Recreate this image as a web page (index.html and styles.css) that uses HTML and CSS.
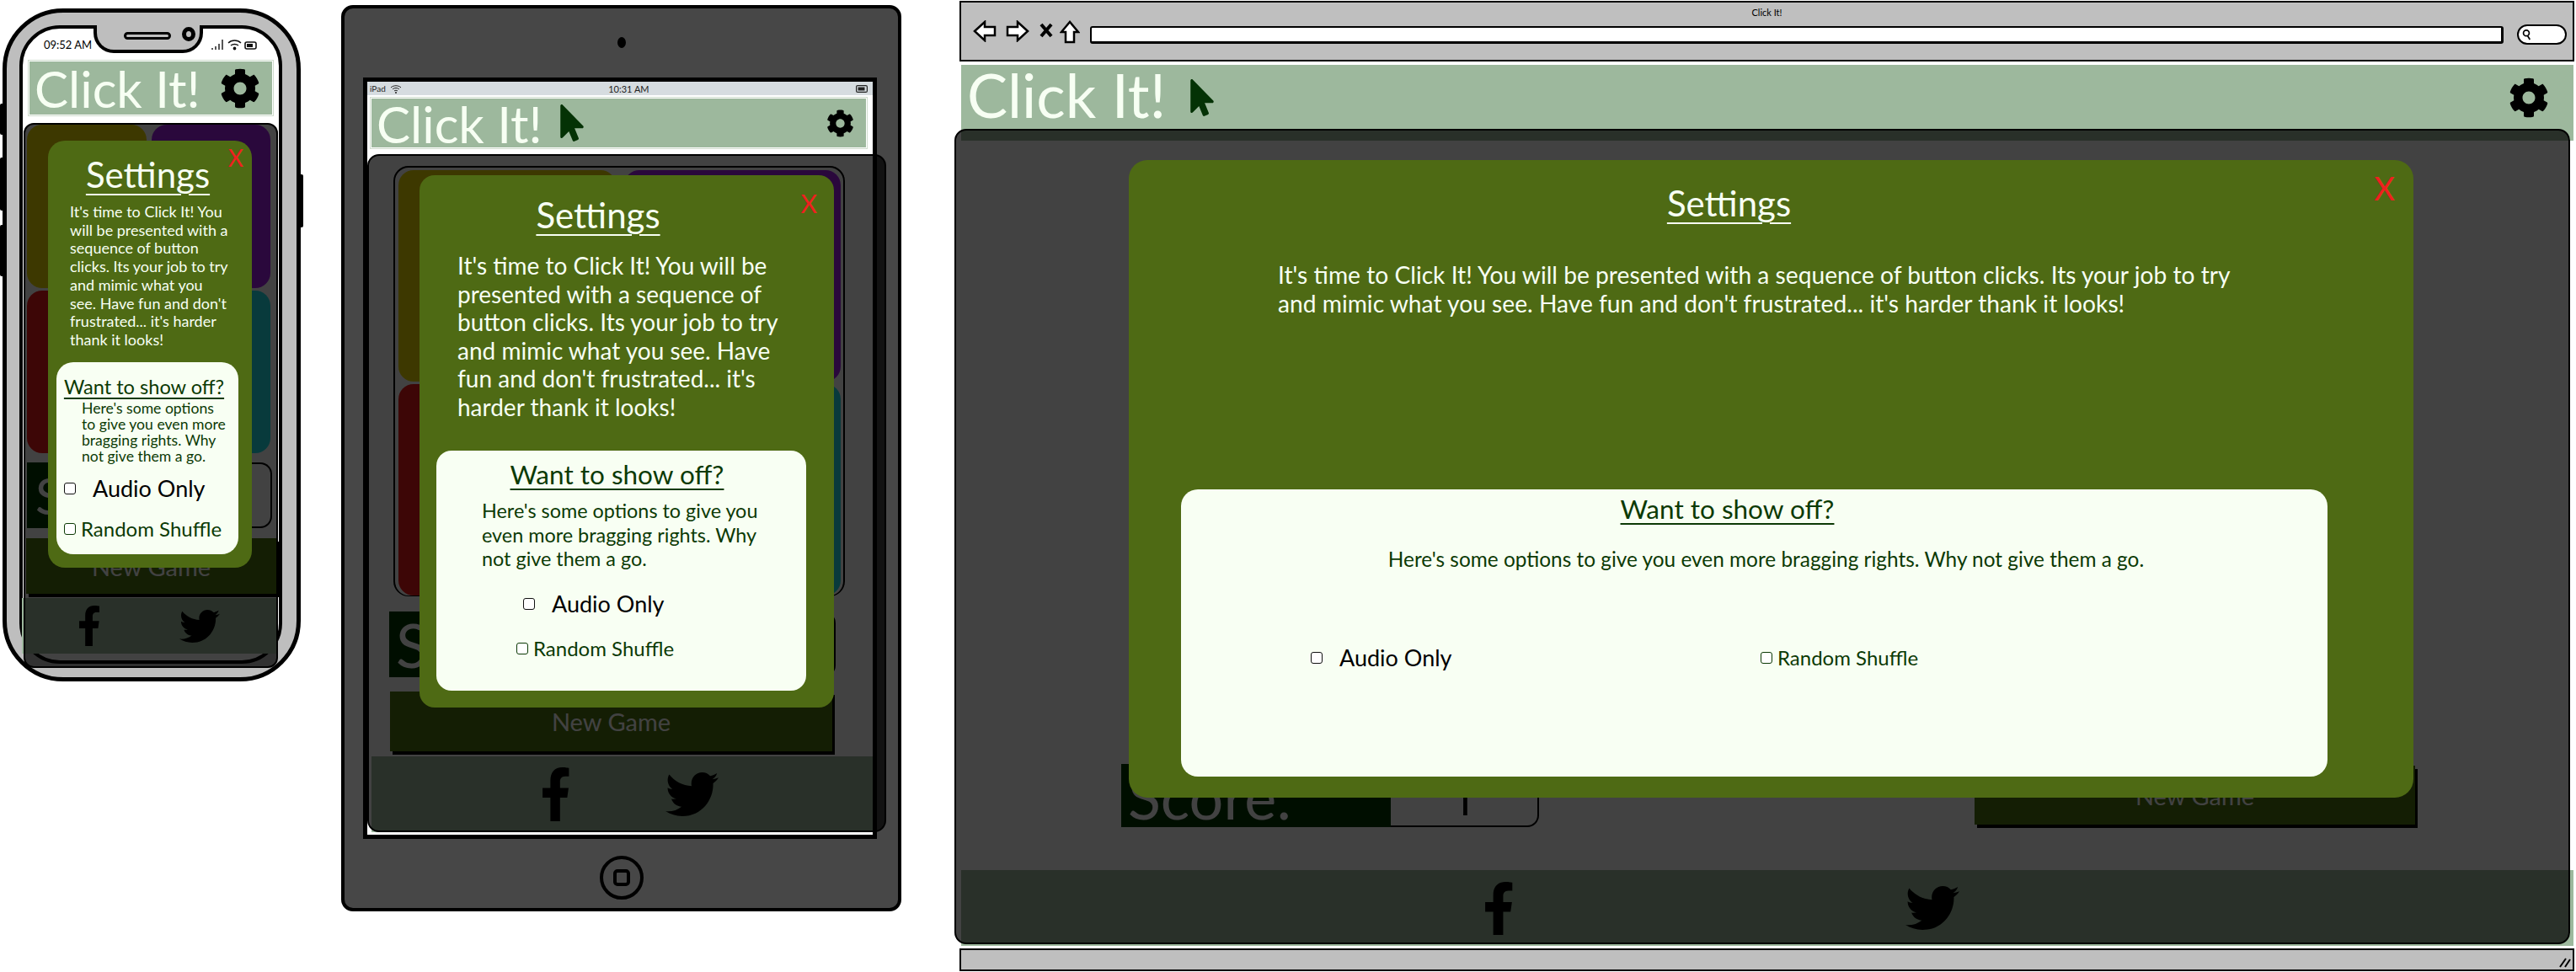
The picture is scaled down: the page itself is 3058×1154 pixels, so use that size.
FILE: index.html
```html
<!DOCTYPE html>
<html lang="en">
<head>
  <meta charset="UTF-8"/>
  <title>Click It! wireframes</title>
  <link rel="stylesheet" href="styles.css">
</head>
<body>
  <svg class="defs" width="0" height="0">
    <symbol id="i-gear" viewBox="0 0 512 512"><path d="M487.4 315.7l-42.6-24.6c4.3-23.2 4.3-47 0-70.2l42.6-24.6c4.9-2.8 7.1-8.6 5.5-14-11.1-35.6-30-67.8-54.7-94.6-3.8-4.1-10-5.1-14.8-2.3L380.8 110c-17.9-15.4-38.5-27.3-60.8-35.1V25.8c0-5.6-3.9-10.5-9.4-11.7-36.7-8.2-74.3-7.8-109.2 0-5.5 1.2-9.4 6.1-9.4 11.7V75c-22.2 7.9-42.8 19.8-60.8 35.1L88.7 85.5c-4.9-2.8-11-1.9-14.8 2.3-24.7 26.7-43.6 58.9-54.7 94.6-1.7 5.4.6 11.2 5.5 14L67.3 221c-4.3 23.2-4.3 47 0 70.2l-42.6 24.6c-4.9 2.8-7.1 8.6-5.5 14 11.1 35.6 30 67.8 54.7 94.6 3.8 4.1 10 5.1 14.8 2.3l42.6-24.6c17.9 15.4 38.5 27.3 60.8 35.1v49.2c0 5.6 3.9 10.5 9.4 11.7 36.7 8.2 74.3 7.8 109.2 0 5.5-1.2 9.4-6.1 9.4-11.7v-49.2c22.2-7.9 42.8-19.8 60.8-35.1l42.6 24.6c4.9 2.8 11 1.9 14.8-2.3 24.7-26.7 43.6-58.9 54.7-94.6 1.5-5.5-.7-11.3-5.6-14.1zM256 336c-44.1 0-80-35.9-80-80s35.9-80 80-80 80 35.9 80 80-35.9 80-80 80z"/></symbol>
    <symbol id="i-pointer" viewBox="0 0 320 512"><path d="M302.189 329.126H196.105l55.831 135.993c3.889 9.428-.555 19.999-9.444 23.999l-49.165 21.427c-9.165 4-19.443-.571-23.332-9.714l-53.053-129.136-86.664 89.138C18.729 472.71 0 463.554 0 447.977V18.299C0 1.899 19.921-6.096 30.277 5.443l284.412 292.542c11.472 11.179 3.007 31.141-12.5 31.141z"/></symbol>
    <symbol id="i-facebook" viewBox="22 0 298 512" preserveAspectRatio="none"><path d="M279.14 288l14.22-92.66h-88.91v-60.13c0-25.35 12.42-50.06 52.24-50.06h40.42V6.26S260.43 0 225.36 0c-73.22 0-121.08 44.38-121.08 124.72v70.62H22.89V288h81.39v224h100.17V288z"/></symbol>
    <symbol id="i-twitter" viewBox="0 48 512 416" preserveAspectRatio="none"><path d="M459.37 151.716c.325 4.548.325 9.097.325 13.645 0 138.72-105.583 298.558-298.558 298.558-59.452 0-114.68-17.219-161.137-47.106 8.447.974 16.568 1.299 25.34 1.299 49.055 0 94.213-16.568 130.274-44.832-46.132-.975-84.792-31.188-98.112-72.772 6.498.974 12.995 1.624 19.818 1.624 9.421 0 18.843-1.3 27.614-3.573-48.081-9.747-84.143-51.98-84.143-102.985v-1.299c13.969 7.797 30.214 12.67 47.431 13.319-28.264-18.843-46.781-51.005-46.781-87.391 0-19.492 5.197-37.36 14.294-52.954 51.655 63.675 129.3 105.258 216.365 109.807-1.624-7.797-2.599-15.918-2.599-24.04 0-57.828 46.782-104.934 104.934-104.934 30.213 0 57.502 12.67 76.67 33.137 23.715-4.548 46.456-13.32 66.599-25.34-7.798 24.366-24.366 44.833-46.132 57.827 21.117-2.273 41.584-8.122 60.426-16.243-14.292 20.791-32.161 39.308-52.628 54.253z"/></symbol>
  </svg>

  <div class="canvas">

    <!-- PHONE -->
    <div class="phone">
      <span class="side-btn side-btn-a"></span>
      <span class="side-btn side-btn-b"></span>
      <span class="side-btn side-btn-c"></span>
      <span class="side-btn side-btn-d"></span>
      <div class="phone-screen">
        <div class="notch"><span class="speaker"></span><span class="lens"></span></div>
        <div class="phone-status">
          <span>09:52 AM</span>
          <svg class="phone-signal" viewBox="0 0 54 14" fill="none" stroke="#111" stroke-width="1.4">
            <path d="M1 13v-2M5 13V9M9 13V6M13 13V1"/>
            <path d="M20 5c4-4 11-4 15 0M23 8c2.500-2 6.500-2 9 0"/>
            <circle cx="27.500" cy="11.500" r="1.200" fill="#111"/>
            <rect x="40" y="4" width="13" height="8" rx="2" stroke-width="1.600"/>
            <rect x="42" y="6" width="7" height="4" fill="#111" stroke="none"/>
          </svg>
        </div>
        <div class="header">
          <span class="logo">Click It!</span>
          <svg class="gear"><use href="#i-gear"/></svg>
        </div>
        <div class="board">
          <div class="pad pad-yellow"></div><div class="pad pad-purple"></div>
          <div class="pad pad-red"></div><div class="pad pad-teal"></div>
        </div>
        <div class="controls">
          <div class="score"><span class="score-label">Score:</span><span class="score-value">1</span></div>
          <div class="new-game">New Game</div>
        </div>
        <div class="footer">
          <svg class="fb"><use href="#i-facebook"/></svg>
          <svg class="tw"><use href="#i-twitter"/></svg>
        </div>
        <div class="overlay">
          <div class="modal">
            <span class="close">X</span>
            <h2>Settings</h2>
            <p class="intro">It's time to Click It! You<br>will be presented with a<br>sequence of button<br>clicks. Its your job to try<br>and mimic what you<br>see. Have fun and don't<br>frustrated... it's harder<br>thank it looks!</p>
            <div class="card">
              <h3>Want to show off?</h3>
              <p class="card-text">Here's some options<br>to give you even more<br>bragging rights. Why<br>not give them a go.</p>
              <div class="options">
                <label class="opt opt-audio"><input type="checkbox" class="check">Audio Only</label>
                <label class="opt opt-shuffle"><input type="checkbox" class="check">Random Shuffle</label>
              </div>
            </div>
          </div>
        </div>
      </div>
    </div>

    <!-- TABLET -->
    <div class="tablet">
      <span class="tablet-cam"></span>
      <div class="tablet-screen">
        <div class="tablet-status">
          <span class="tablet-carrier">iPad
            <svg class="tablet-wifi" viewBox="0 0 14 11" fill="none" stroke="#222" stroke-width="1"><path d="M1 4c3-3 9-3 12 0M3 6c2-2 6-2 8 0M5 8c1-1 3-1 4 0"/><circle cx="7" cy="10" r=".6" fill="#222"/></svg>
          </span>
          <span class="tablet-time">10:31 AM</span>
          <svg class="tablet-batt" viewBox="0 0 14 9" fill="none" stroke="#222" stroke-width="1.200"><rect x=".6" y=".6" width="12.800" height="7.800" rx="1.500"/><rect x="2.500" y="2.500" width="8" height="4" fill="#222" stroke="none"/></svg>
        </div>
        <div class="header">
          <span class="logo">Click It!</span>
          <svg class="pointer"><use href="#i-pointer"/></svg>
          <svg class="gear"><use href="#i-gear"/></svg>
        </div>
        <div class="board">
          <div class="pad pad-yellow"></div><div class="pad pad-purple"></div>
          <div class="pad pad-red"></div><div class="pad pad-teal"></div>
        </div>
        <div class="controls">
          <div class="score"><span class="score-label">Score:</span><span class="score-value">1</span></div>
          <div class="new-game">New Game</div>
        </div>
        <div class="footer">
          <svg class="fb"><use href="#i-facebook"/></svg>
          <svg class="tw"><use href="#i-twitter"/></svg>
        </div>
        <div class="overlay">
          <div class="modal">
            <span class="close">X</span>
            <h2>Settings</h2>
            <p class="intro">It's time to Click It! You will be<br>presented with a sequence of<br>button clicks. Its your job to try<br>and mimic what you see. Have<br>fun and don't frustrated... it's<br>harder thank it looks!</p>
            <div class="card">
              <h3>Want to show off?</h3>
              <p class="card-text">Here's some options to give you<br>even more bragging rights. Why<br>not give them a go.</p>
              <div class="options">
                <label class="opt opt-audio"><input type="checkbox" class="check">Audio Only</label>
                <label class="opt opt-shuffle"><input type="checkbox" class="check">Random Shuffle</label>
              </div>
            </div>
          </div>
        </div>
      </div>
      <span class="tablet-home"><span></span></span>
    </div>

    <!-- DESKTOP BROWSER -->
    <div class="browser">
      <div class="browser-top">
        <div class="browser-title">Click It!</div>
        <div class="browser-nav">
          <svg class="nav-icon" viewBox="0 0 28 26" fill="#fff" stroke="#000" stroke-width="2.500"><path d="M2 13L14 2v6h12v10H14v6z"/></svg>
          <svg class="nav-icon" viewBox="0 0 28 26" fill="#fff" stroke="#000" stroke-width="2.500"><path d="M26 13L14 2v6H2v10h12v6z"/></svg>
          <svg class="nav-stop" viewBox="0 0 16 18" fill="none" stroke="#000" stroke-width="4"><path d="M2 2l12 14M14 2L2 16"/></svg>
          <svg class="nav-home" viewBox="0 0 24 28" fill="#fff" stroke="#000" stroke-width="2.500"><path d="M12 2L2 14h5v12h10V14h5z"/></svg>
          <div class="url-bar"></div>
          <div class="search-box">
            <svg viewBox="0 0 14 16" fill="none" stroke="#000" stroke-width="2"><circle cx="7" cy="6" r="4"/><path d="M9 10l3 5"/></svg>
          </div>
        </div>
      </div>
      <div class="page">
        <div class="header">
          <span class="logo">Click It!</span>
          <svg class="pointer"><use href="#i-pointer"/></svg>
          <svg class="gear"><use href="#i-gear"/></svg>
        </div>
        <div class="page-main">
          <div class="board">
            <div class="pad pad-yellow"></div><div class="pad pad-purple"></div>
            <div class="pad pad-red"></div><div class="pad pad-teal"></div>
          </div>
          <div class="controls">
            <div class="score"><span class="score-label">Score:</span><span class="score-value">1</span></div>
            <div class="new-game">New Game</div>
          </div>
        </div>
        <div class="footer">
          <svg class="fb"><use href="#i-facebook"/></svg>
          <svg class="tw"><use href="#i-twitter"/></svg>
        </div>
        <div class="overlay">
          <div class="modal">
            <span class="close">X</span>
            <h2>Settings</h2>
            <p class="intro">It's time to Click It! You will be presented with a sequence of button clicks. Its your job to try<br>and mimic what you see. Have fun and don't frustrated... it's harder thank it looks!</p>
            <div class="card">
              <h3>Want to show off?</h3>
              <p class="card-text">Here's some options to give you even more bragging rights. Why not give them a go.</p>
              <div class="options">
                <label class="opt opt-audio"><input type="checkbox" class="check">Audio Only</label>
                <label class="opt opt-shuffle"><input type="checkbox" class="check">Random Shuffle</label>
              </div>
            </div>
          </div>
        </div>
      </div>
      <div class="browser-bottom">
        <svg class="grip" viewBox="0 0 14 14" fill="none" stroke="#000" stroke-width="2"><path d="M1 13L8 3M7 13l6-9"/></svg>
      </div>
    </div>

  </div>
</body>
</html>
```

FILE: styles.css
```css
* { box-sizing:border-box; }
body { margin:0; background:#fff; font-family:"Lato", sans-serif; color:#000; }
.defs { position:absolute; }
.canvas { position:relative; width:3058px; height:1154px; overflow:hidden; }

/* shared game parts */
.header { display:flex; align-items:center; background:#9db89d; }
.logo { color:#f7fff3; font-size:60px; line-height:1; white-space:nowrap; }
.gear { margin-left:auto; fill:#000; flex:none; }
.pointer { fill:#043205; flex:none; }
.board { display:grid; grid-template-columns:1fr 1fr; }
.pad { border-radius:18px; }
.pad-yellow { background:#ebd700; }
.pad-purple { background:#a21fe7; }
.pad-red { background:#eb1717; }
.pad-teal { background:#1fdfe7; }
.score { display:flex; }
.score-label { background:#003600; color:#fff; font-size:72px; line-height:1; white-space:nowrap; display:flex; align-items:center; }
.score-value { flex:1; display:flex; align-items:center; justify-content:center; border:2px solid #000; border-left:none; border-radius:0 14px 14px 0; color:#000; font-family:"Open Sans", sans-serif; font-size:60px; }
.new-game { background:#4d7310; color:#fff; font-size:29px; display:flex; align-items:center; justify-content:center; box-shadow:3px 4px 0 #000; }
.footer { display:flex; align-items:center; background:#9db89d; flex:none; }
.fb, .tw { fill:#000; flex:none; }

.overlay { position:absolute; background:rgba(0,0,0,.74); border:2px solid #000; }
.modal { position:relative; background:#4e6a14; color:#f7fff3; }
.close { position:absolute; color:#f01f1f; line-height:1; }
.modal h2 { margin:0; font-weight:400; text-align:center; line-height:40px; text-decoration:underline; text-decoration-thickness:2px; text-underline-offset:7px; }
.intro { margin:0; white-space:nowrap; }
.card { background:#f8fff3; color:#0c3a05; }
.card h3 { margin:0; font-weight:400; text-align:center; text-decoration:underline; text-decoration-thickness:2px; }
.card-text { margin:0; white-space:nowrap; }
.options { display:flex; }
.opt { display:flex; align-items:center; white-space:nowrap; }
.opt-audio { color:#000; }
.check { appearance:none; margin:0; width:14px; height:14px; border:1.500px solid #111; border-radius:3px; background:#fff; flex:none; }
.opt-shuffle .check { border-color:#0c3a05; }

/* phone */
.phone { position:absolute; left:3px; top:10px; width:354px; height:799px; background:#bebebe; border:5px solid #000; border-radius:72px; }
.side-btn { position:absolute; background:#000; width:7px; border-radius:2px; }
.side-btn-a { left:-8px; top:108px; height:37px; }
.side-btn-b { left:-8px; top:172px; height:63px; }
.side-btn-c { left:-8px; top:252px; height:61px; }
.side-btn-d { right:-8px; top:192px; height:63px; }
.phone-screen { position:relative; margin:15px 0 0 15px; width:312px; height:758px; background:#fff; border:4px solid #000; border-radius:48px; display:flex; flex-direction:column; }
.notch { position:absolute; left:84px; top:-4px; width:130px; height:33px; background:#bebebe; border:4px solid #000; border-top:none; border-radius:0 0 24px 24px; }
.speaker { position:absolute; left:32px; top:8px; width:56px; height:9px; border:3px solid #000; border-radius:5px; }
.lens { position:absolute; left:101px; top:2px; width:16px; height:17px; border:5px solid #000; border-radius:50%; }
.phone-status { display:flex; align-items:center; justify-content:space-between; height:37px; padding:0 26px 0 25px; font-size:13px; flex:none; }
.phone-signal { width:54px; height:14px; }
.phone-screen .header { height:67px; margin:0 6px; padding:0 15px 0 7px; border:1px solid #cfdccd; outline:1px solid #fff; outline-offset:-2px; flex:none; }
.phone-screen .gear { width:48px; height:48px; }
.phone-screen .board { margin:10px 0 0 5px; width:289px; height:390px; gap:3px 6px; flex:none; }
.phone-screen .score { margin:11px 0 0 5px; width:291px; height:78px; }
.phone-screen .score-label { width:188px; padding-left:10px; font-size:60px; }
.phone-screen .new-game { margin:12px 0 0 4px; width:297px; height:66px; }
.phone-screen .footer { margin:5px 0 0 -1px; width:304px; height:66px; padding-left:68px; gap:93px; }
.phone-screen .fb { width:26px; height:48px; }
.phone-screen .tw { width:48px; height:39px; }
.phone-screen .overlay { left:1px; top:112px; width:302px; height:647px; border-radius:12px; }
.phone-screen .modal { margin:19px 0 0 27px; width:242px; height:507px; padding-top:20px; border-radius:20px; }
.phone-screen .close { right:10px; top:6px; font-size:28px; }
.phone-screen h2 { font-size:42px; padding-right:5px; }
.phone-screen .intro { margin:14px 0 15px 26px; font-size:18px; line-height:21.7px; }
.phone-screen .card { margin-left:10px; width:216px; height:228px; padding-top:16px; border-radius:20px; }
.phone-screen h3 { font-size:23.600px; padding-right:8px; line-height:26px; text-underline-offset:4px; }
.phone-screen .card-text { margin:3px 0 0 30px; font-size:17.600px; line-height:19px; }
.phone-screen .options { flex-direction:column; padding-left:9px; margin-top:14px; gap:18px; }
.phone-screen .opt-audio { font-size:27px; line-height:30px; gap:20px; }
.phone-screen .opt-shuffle { font-size:24px; line-height:30px; gap:6px; }

/* tablet */
.tablet { position:absolute; left:405px; top:6px; width:665px; height:1076px; background:#474747; border:4px solid #000; border-radius:14px; display:flex; flex-direction:column; align-items:center; }
.tablet-cam { margin-top:34px; width:10px; height:13px; background:#000; border-radius:50%; flex:none; }
.tablet-screen { position:relative; align-self:flex-start; margin:35px 0 0 22px; width:610px; height:904px; background:#fff; border:5px solid #000; display:flex; flex-direction:column; flex:none; }
.tablet-status { position:relative; display:flex; align-items:center; justify-content:space-between; height:16px; padding:0 6px 0 3px; background:#d6dce0; font-size:10px; color:#222; flex:none; }
.tablet-carrier { display:flex; align-items:center; gap:5px; }
.tablet-wifi { width:14px; height:11px; }
.tablet-time { font-size:11px; }
.tablet-batt { width:14px; height:9px; }
.tablet-screen .header { height:62px; margin:2px 6px 0 3px; padding:0 15px 0 7px; border:1px solid #cfdccd; outline:1px solid #fff; outline-offset:-2px; flex:none; }
.tablet-screen .logo { position:relative; top:1px; }
.tablet-screen .pointer { width:30px; height:44px; margin-left:20px; }
.tablet-screen .gear { width:33px; height:33px; }
.tablet-screen .board { margin:20px 0 0 31px; width:536px; height:511px; gap:3px 10px; padding:3px 3px 0 4px; border:2px solid #000; border-bottom-width:1px; border-radius:18px; flex:none; }
.tablet-screen .score { margin:18px 0 0 26px; width:530px; height:78px; }
.tablet-screen .score-label { width:342px; padding-left:8px; }
.tablet-screen .new-game { margin:17px 0 0 27px; width:525px; height:71px; }
.tablet-screen .footer { margin:6px 0 0 5px; width:595px; height:90px; padding-left:203px; gap:112px; }
.tablet-screen .fb { width:34px; height:64px; }
.tablet-screen .tw { width:63px; height:52px; }
.tablet-screen .overlay { left:0; top:86px; width:616px; height:805px; border-radius:14px; }
.tablet-screen .modal { margin:23px 0 0 60px; width:492px; height:632px; padding-top:27px; border-radius:18px; }
.tablet-screen .close { right:20px; top:18px; font-size:30px; }
.tablet-screen h2 { font-size:42px; padding-right:68px; }
.tablet-screen .intro { margin:24px 0 35px 45px; font-size:28px; line-height:33.500px; }
.tablet-screen .card { margin-left:20px; width:439px; height:285px; padding-top:11px; border-radius:18px; }
.tablet-screen h3 { font-size:31.500px; padding-right:10px; line-height:34px; text-underline-offset:5px; }
.tablet-screen .card-text { margin:12px 0 0 54px; font-size:23.400px; line-height:28.500px; }
.tablet-screen .options { flex-direction:column; margin:24px 0 0 95px; gap:24px; align-items:flex-start; }
.tablet-screen .opt-audio { font-size:27px; line-height:30px; gap:20px; margin-left:8px; }
.tablet-screen .opt-shuffle { font-size:24px; line-height:28px; gap:6px; }
.tablet-home { margin-top:20px; width:52px; height:52px; border:4px solid #000; border-radius:50%; display:flex; align-items:center; justify-content:center; flex:none; }
.tablet-home span { width:20px; height:20px; border:4px solid #000; border-radius:5px; }

/* desktop browser */
.browser { position:absolute; left:1139px; top:1px; width:1917px; height:1152px; display:flex; flex-direction:column; }
.browser-top { height:72px; background:#bfbfbf; border:2px solid #000; padding:0 0 0 14px; flex:none; }
.browser-title { text-align:center; font-size:11px; line-height:11px; padding-top:6px; padding-right:14px; }
.browser-nav { display:flex; align-items:flex-start; margin-top:4px; height:30px; }
.nav-icon { width:28px; height:26px; margin-right:11px; }
.nav-stop { width:16px; height:18px; margin:3px 8px 0 1px; }
.nav-home { width:24px; height:28px; margin-right:12px; }
.url-bar { width:1678px; height:21px; margin-top:7px; background:#fff; border:2px solid #000; border-width:2px 3px 3px 2px; border-radius:3px; }
.search-box { margin:5px 0 0 16px; width:59px; height:24px; background:#fff; border:2px solid #000; border-radius:12px; display:flex; align-items:center; padding-left:3px; }
.search-box svg { width:12px; height:14px; }
.page { position:relative; margin:3px 1px 0 2px; flex:1; display:flex; flex-direction:column; background:#fff; border-top:1px solid #fff; padding-bottom:3px; }
.page .header { height:90px; padding:0 29px 12px 7px; flex:none; }
.page .logo { font-size:72px; position:relative; top:-4px; }
.page .pointer { width:30px; height:44px; margin-left:28px; }
.page .gear { width:48px; height:48px; }
.page-main { flex:1; padding:43px 0 0 0; }
.page .board { margin:0 195px 0 204px; height:680px; gap:4px 10px; }
.page .controls { display:flex; justify-content:space-between; margin:17px 188px 0 190px; }
.page .score { width:496px; height:75px; }
.page .score-label { width:320px; padding-left:8px; }
.page .new-game { width:523px; height:70px; margin-top:2px; }
.page .footer { height:90px; padding-left:622px; gap:464px; }
.page .fb { width:35px; height:63px; }
.page .tw { width:64px; height:52px; }
.page .overlay { left:-8px; top:76px; width:1918px; height:968px; border-radius:14px; }
.page .modal { margin:35px 0 0 205px; width:1525px; height:757px; padding-top:31px; border-radius:22px; }
.page .close { right:22px; top:14px; font-size:38px; }
.page h2 { font-size:42px; padding-right:100px; }
.page .intro { margin:48px 0 204px 177px; font-size:28.200px; line-height:34px; }
.page .card { margin-left:62px; width:1361px; height:341px; padding-top:6px; border-radius:20px; }
.page h3 { font-size:31.500px; padding-right:64px; line-height:34px; text-underline-offset:5px; }
.page .card-text { margin:29px 0 0 0; text-align:center; padding-left:28px; font-size:24.400px; line-height:28px; }
.page .options { margin:88px 0 0 154px; gap:0; }
.page .opt-audio { font-size:27px; line-height:30px; gap:20px; width:534px; }
.page .opt-shuffle { font-size:24px; line-height:30px; gap:6px; }
.browser-bottom { position:relative; height:27px; background:#bfbfbf; border:2px solid #000; border-width:2px; flex:none; }
.grip { position:absolute; right:2px; bottom:2px; width:14px; height:14px; }
```
